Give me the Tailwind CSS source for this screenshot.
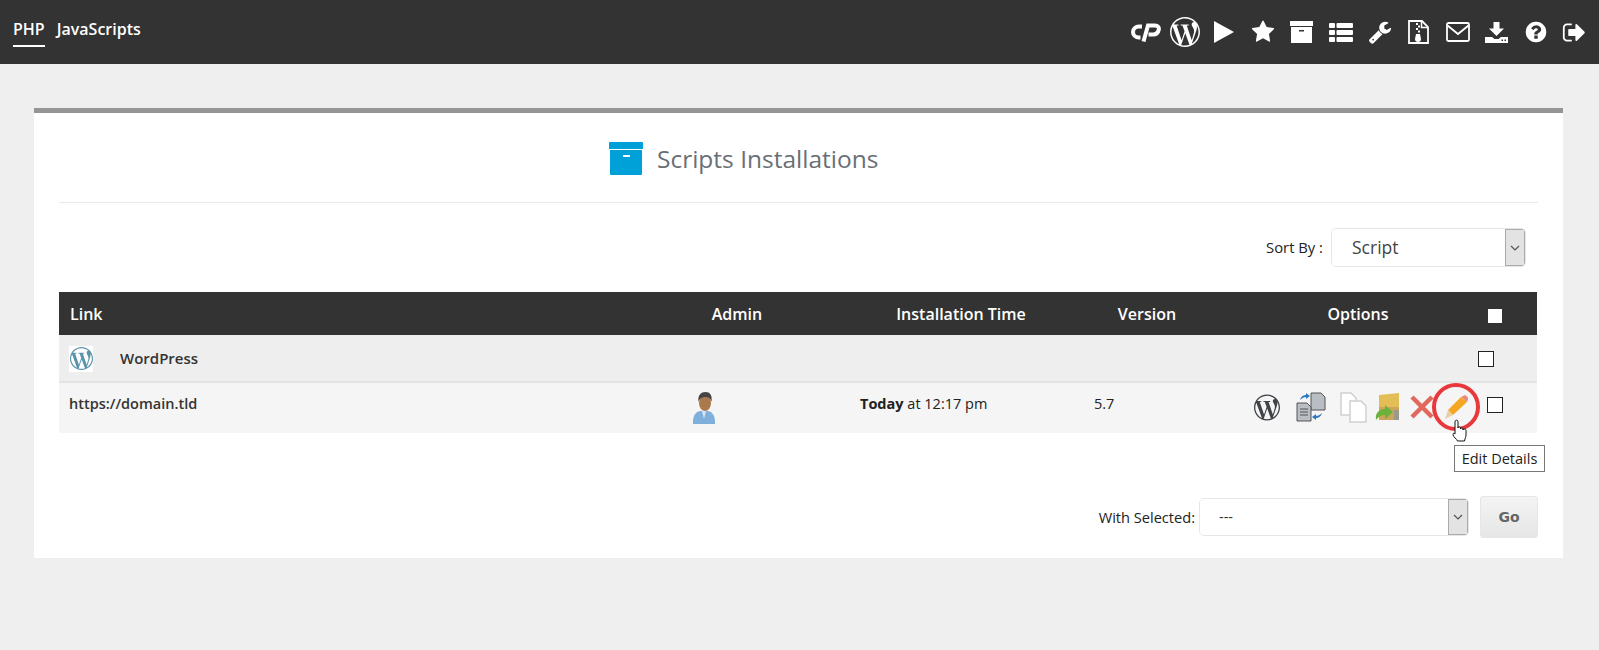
<!DOCTYPE html>
<html lang="en">
<head>
  <meta charset="UTF-8" />
  <title>Scripts Installations</title>
  <script src="https://cdn.jsdelivr.net/npm/@tailwindcss/browser@4"></script>
</head>
<body class="bg-[#efefef] font-['Open_Sans',sans-serif] text-[#333] h-[650px] overflow-hidden">

  <svg class="hidden">
    <symbol id="wp" viewBox="0 0 24 24">
      <path d="M21.469 6.825c.84 1.537 1.318 3.3 1.318 5.175 0 3.979-2.156 7.456-5.363 9.325l3.295-9.527c.615-1.54.82-2.771.82-3.864 0-.405-.026-.78-.07-1.11m-7.981.105c.647-.03 1.232-.105 1.232-.105.582-.075.514-.93-.067-.899 0 0-1.755.135-2.88.135-1.064 0-2.85-.15-2.85-.15-.585-.03-.661.855-.075.885 0 0 .54.061 1.125.09l1.68 4.605-2.37 7.08L5.354 6.9c.649-.03 1.234-.1 1.234-.1.585-.075.516-.93-.065-.896 0 0-1.746.138-2.874.138-.2 0-.438-.008-.69-.015C4.911 3.15 8.235 1.215 12 1.215c2.809 0 5.365 1.072 7.286 2.833-.046-.003-.091-.009-.141-.009-1.06 0-1.812.923-1.812 1.914 0 .89.513 1.643 1.06 2.531.411.72.89 1.643.89 2.977 0 .915-.354 1.994-.821 3.479l-1.075 3.585-3.9-11.61.001.014zM12 22.784c-1.059 0-2.081-.153-3.048-.437l3.237-9.406 3.315 9.087c.024.053.05.101.078.149-1.12.393-2.325.609-3.582.609M1.211 12c0-1.564.336-3.05.935-4.39L7.29 21.709C3.694 19.96 1.212 16.271 1.211 12M12 0C5.385 0 0 5.385 0 12s5.385 12 12 12 12-5.385 12-12S18.615 0 12 0"/>
    </symbol>
  </svg>

  <!-- top bar -->
  <header class="h-[64px] bg-[#333] flex items-center justify-between text-white pl-[13px] pr-[5px]">
    <nav class="self-start flex gap-[12px] text-[16px] font-semibold">
      <a class="h-[47px] pt-[17px] leading-[24px] border-b-2 border-white">PHP</a>
      <a class="h-[47px] pt-[17px] leading-[24px]">JavaScripts</a>
    </nav>
    <div class="flex items-center">
      <span class="w-[39px] flex justify-center">
        <svg class="w-[30px] h-[20px]" viewBox="0 0 30 20" fill="none" stroke="white" stroke-width="4"><path d="M11 4.500H8C4.500 4.500 2 7 2 10S4.500 15.500 8 15.500H9.500"/><path d="M12.500 19.500 17 3.500H24C27 3.500 28.200 5.500 27.800 7.500 27.200 10.500 25 12.500 22 12.500H17.500"/></svg>
      </span>
      <span class="w-[39px] flex justify-center"><svg class="w-[30px] h-[30px] fill-white"><use href="#wp"/></svg></span>
      <span class="w-[39px] flex justify-center"><svg class="w-[20px] h-[22px] fill-white" viewBox="0 0 20 22"><path d="M0 0 20 11 0 22z"/></svg></span>
      <span class="w-[39px] flex justify-center"><svg class="w-[24px] h-[24px] fill-white" viewBox="0 0 1792 1792"><path d="M1728 647q0 22-26 48l-363 354 86 500q1 7 1 20 0 21-10.500 35.500t-30.500 14.500q-19 0-40-12l-449-236-449 236q-22 12-40 12-21 0-31.500-14.500t-10.500-35.500q0-6 2-20l86-500-364-354q-25-27-25-48 0-37 56-46l502-73 225-455q19-41 49-41t49 41l225 455 502 73q56 9 56 46z"/></svg></span>
      <span class="w-[39px] flex justify-center"><svg class="w-[23px] h-[22px] fill-white" viewBox="0 0 23 22"><path fill-rule="evenodd" d="M0 0h23v5H0zM1 6h21v16H1zM9 9v1.500h5V9z"/></svg></span>
      <span class="w-[39px] flex justify-center"><svg class="w-[24px] h-[19px] fill-white" viewBox="0 0 24 19"><rect width="6" height="5" rx="1"/><rect x="7.500" width="16.500" height="5" rx="1"/><rect y="7" width="6" height="5" rx="1"/><rect x="7.500" y="7" width="16.500" height="5" rx="1"/><rect y="14" width="6" height="5" rx="1"/><rect x="7.500" y="14" width="16.500" height="5" rx="1"/></svg></span>
      <span class="w-[39px] flex justify-center"><svg class="w-[24px] h-[24px] fill-white" viewBox="0 0 1792 1792"><path d="M448 1472q0-26-19-45t-45-19-45 19-19 45 19 45 45 19 45-19 19-45zm644-420l-682 682q-37 37-90 37-52 0-91-37l-106-108q-38-36-38-90 0-53 38-91l681-681q39 98 114.500 173.500t173.500 114.500zm634-435q0 39-23 106-47 134-164.500 217.500t-258.500 83.500q-185 0-316.500-131.500t-131.500-316.500 131.500-316.500 316.500-131.500q58 0 121.500 16.500t107.500 46.500q16 11 16 28t-16 28l-293 169v224l193 107q5-3 79-48.500t135.500-81 70.500-35.500q15 0 23.500 10t8.500 25z"/></svg></span>
      <span class="w-[39px] flex justify-center">
        <svg class="w-[21px] h-[24px]" viewBox="0 0 21 24" fill="none" stroke="white"><path d="M1 1h13l6 6v16H1z" stroke-width="1.800"/><path d="M13.500 1v6.500H20" stroke-width="1.500"/><path d="M8 3h2v2H8zM10 5.500h2v2h-2zM8 8h2v2H8zM10 10.500h2v2h-2z" fill="white" stroke="none"/><path d="M8 14h4l1 5a3 3 0 0 1-6 0z" fill="white" stroke="none"/></svg>
      </span>
      <span class="w-[39px] flex justify-center">
        <svg class="w-[24px] h-[20px]" viewBox="0 0 24 20" fill="none" stroke="white" stroke-width="1.800"><rect x="1" y="1" width="22" height="18" rx="1.500"/><path d="M1.500 3.500 12 12l10.500-8.500"/></svg>
      </span>
      <span class="w-[39px] flex justify-center"><svg class="w-[23px] h-[21px] fill-white" viewBox="0 0 23 21"><path d="M8.500 0h6v6.500H19L11.500 14 4 6.500h4.500z"/><path fill-rule="evenodd" d="M0 15h7l2.500 2h4l2.500-2h7v6H0zM16.500 17.500v1.500H18v-1.500zM19.500 17.500v1.500H21v-1.500z"/></svg></span>
      <span class="w-[39px] flex justify-center"><svg class="w-[24px] h-[24px] fill-white" viewBox="0 0 1792 1792"><path d="M1024 1376v-192q0-14-9-23t-23-9h-192q-14 0-23 9t-9 23v192q0 14 9 23t23 9h192q14 0 23-9t9-23zm256-672q0-88-55.500-163t-138.500-116-170-41q-243 0-371 213-15 24 8 42l132 100q7 6 19 6 16 0 25-12 53-68 86-92 34-24 86-24 48 0 85.500 26t37.500 59q0 38-20 61t-68 45q-63 28-115.500 86.500t-52.500 125.500v36q0 14 9 23t23 9h192q14 0 23-9t9-23q0-19 21.500-49.500t54.500-49.500q32-18 49-28.500t46-35 44.500-48 28-60.500 12.500-81zm384 192q0 209-103 385.500t-279.500 279.500-385.500 103-385.500-103-279.500-279.500-103-385.500 103-385.500 279.500-279.500 385.500-103 385.500 103 279.500 279.500 103 385.500z"/></svg></span>
      <span class="w-[39px] flex justify-center"><svg class="w-[25px] h-[25px] fill-white" viewBox="0 0 1792 1792"><path d="M704 1440q0 4 1 20t.5 26.500-3 23.500-10 19.500-20.500 6.500h-320q-119 0-203.500-84.500t-84.500-203.500v-704q0-119 84.500-203.500t203.500-84.500h320q13 0 22.500 9.500t9.500 22.500q0 4 1 20t.5 26.500-3 23.500-10 19.500-20.500 6.500h-320q-66 0-113 47t-47 113v704q0 66 47 113t113 47h312l11.500 1 11.500 3 8 5.500 7 9 2 13.500zm928-544q0 26-19 45l-544 544q-19 19-45 19t-45-19-19-45v-288h-448q-26 0-45-19t-19-45v-384q0-26 19-45t45-19h448v-288q0-26 19-45t45-19 45 19l544 544q19 19 19 45z"/></svg></span>
    </div>
  </header>

  <!-- card -->
  <main class="relative mx-[34px] mt-[44px] w-[1529px] h-[450px] bg-white border-t-[5px] border-[#959595] px-[25px]">
    <div class="h-[90px] border-b border-[#eaeaea] flex items-center pl-[550px] pt-[2px]">
      <svg class="w-[34px] h-[33px] fill-[#00a1d8] mr-[14px]" viewBox="0 0 34 33"><path fill-rule="evenodd" d="M0 1a1 1 0 0 1 1-1h32a1 1 0 0 1 1 1v6H0zM1 8h32v24a1 1 0 0 1-1 1H2a1 1 0 0 1-1-1zM14 13v2h7v-2z"/></svg>
      <h1 class="text-[24.5px] leading-[32px] text-[#6a6f76]">Scripts Installations</h1>
    </div>

    <div class="h-[89px] pt-[25px] flex justify-end items-start pr-[12px]">
      <span class="text-[14.800px] leading-[39px] text-[#222] mr-[8px]">Sort By :</span>
      <div class="w-[195px] h-[39px] flex border border-[#e6e6e6] rounded-[5px] overflow-hidden">
        <select class="flex-1 min-w-0 appearance-none bg-white pl-[20px] text-[17.500px] text-[#444]"><option>Script</option></select>
        <span class="w-[20px] bg-[#e3e3e3] border border-[#aaa] flex items-center justify-center">
          <svg class="w-[10px] h-[6px]" viewBox="0 0 10 6" fill="none" stroke="#555" stroke-width="1.200"><path d="M1 1l4 4 4-4"/></svg>
        </span>
      </div>
    </div>

    <!-- table -->
    <div class="grid grid-cols-[621px_170px_234px_126px_260px_67px] items-center text-[14.500px]">
      <div class="col-span-6 grid grid-cols-subgrid items-center h-[43px] bg-[#333] text-white text-[16px] font-semibold">
        <div class="pl-[11px]">Link</div>
        <div class="text-center pr-[56px]">Admin</div>
        <div class="text-center pr-[12px]">Installation Time</div>
        <div class="text-center">Version</div>
        <div class="text-center pl-[36px]">Options</div>
        <div class="flex justify-center pr-[18px] pt-[5px]"><span class="w-[14px] h-[14px] bg-white block"></span></div>
      </div>

      <div class="col-span-6 grid grid-cols-subgrid items-center h-[48px] pt-[1px] bg-[#eee] border-b-2 border-[#e4e4e4]">
        <div class="flex items-center pl-[10px] font-semibold text-[#333]">
          <span class="w-[24px] h-[26px] bg-white flex items-center justify-center"><svg class="w-[23px] h-[23px] fill-[#5b93ab]"><use href="#wp"/></svg></span>
          <span class="ml-[27px] text-[15px]">WordPress</span>
        </div>
        <div></div><div></div><div></div><div></div>
        <div class="flex justify-start pl-[8px]"><span class="w-[16px] h-[16px] border border-[#222] bg-white block"></span></div>
      </div>

      <div class="col-span-6 grid grid-cols-subgrid items-center h-[50px] bg-[#f5f5f5]">
        <div class="pl-[10px] font-semibold text-[#333] pb-[9px]">https://domain.tld</div>
        <div class="pl-[13px]">
          <svg class="w-[22px] h-[32px] -mt-[1px] blur-[0.4px]" viewBox="0 0 22 32">
            <path d="M0 32c-.500-7 2-12 7-13h8c5 1 7.500 6 7 13z" fill="#7fb0dc"/>
            <path d="M9 19l2 8 2-8z" fill="#d9e6f2"/>
            <ellipse cx="12" cy="11" rx="6" ry="8" fill="#ab7a4c"/>
            <path d="M5.500 10C4.500 3 8 0 12.500 0s7 3 6 10c-1-4-3-5-6-5s-6 1-7 5z" fill="#444"/>
          </svg>
        </div>
        <div class="pl-[10px] pb-[9px] text-[#222]"><b class="font-bold">Today</b> at 12:17 pm</div>
        <div class="pl-[10px] pb-[9px] text-[#222]">5.7</div>
        <div class="flex items-center pl-[44px] pb-[2px]">
          <svg class="w-[26px] h-[27px] fill-[#3f4347]"><use href="#wp"/></svg>
          <svg class="ml-[16px] w-[30px] h-[30px]" viewBox="0 0 30 30">
            <path d="M15 1h10l4 4v13H15z" fill="#b9bec4" stroke="#555"/>
            <path d="M1 11h10l4 4v14H1z" fill="#b9bec4" stroke="#555"/>
            <path d="M4 17h8M4 20h8M4 23h8" stroke="#555"/>
            <path d="M4 8c1-4 4-5 6-5V1l4 3-4 3V5c-2 0-4 1-6 3zM26 21c-1 4-4 5-6 5v2l-4-3 4-3v2c2 0 4-1 6-3z" fill="#2f78bf"/>
          </svg>
          <svg class="ml-[14px] w-[27px] h-[31px]" viewBox="0 0 27 31" fill="#fff" stroke="#cfcfcf" stroke-width="1.500">
            <path d="M1 1h10l5 5v17H1z"/><path d="M10 9h11l5 5v16H10z"/>
          </svg>
          <svg class="ml-[8px] w-[25px] h-[29px]" viewBox="0 0 25 29">
            <path d="M4 2 24 0v27H4z" fill="#e3bd55"/>
            <path d="M4 14h20v13H4z" fill="#c9a65a"/>
            <rect x="19" y="17" width="5" height="10" fill="#9a9a8a"/>
            <path d="M1 27c-1-7 3-11 9-11v-4l8 7-8 7v-4c-4 0-7 2-9 5z" fill="#6cb23a"/>
          </svg>
          <svg class="ml-[10px] w-[24px] h-[24px]" viewBox="0 0 24 24" stroke="#e0685c" stroke-width="4.500"><path d="M2 2l20 20M22 2 2 22"/></svg>
          <svg class="ml-[10px] w-[24px] h-[25px]" viewBox="0 0 24 25">
            <path d="M17 2 4 15l5 5L23 7z" fill="#f5a623"/>
            <path d="M17 2l3-1.500c1-.500 2 0 3 1s1.500 2 1 3L23 7z" fill="#e98a80"/>
            <path d="M4 15 1 24l8-4z" fill="#e8cfa8"/>
          </svg>
        </div>
        <div class="flex justify-start pl-[17px] pb-[7px]"><span class="w-[16px] h-[16px] border border-[#222] bg-white block"></span></div>
      </div>
    </div>

    <!-- with selected -->
    <div class="flex justify-end mt-[63px]">
      <span class="text-[14.600px] leading-[38px] text-[#222] mt-[2px] mr-[4px]">With Selected:</span>
      <div class="w-[270px] h-[38px] mt-[2px] flex border border-[#e6e6e6] rounded-[5px] overflow-hidden">
        <select class="flex-1 min-w-0 appearance-none bg-white pl-[19px] text-[14.500px] text-[#333]"><option>---</option></select>
        <span class="w-[20px] bg-[#e3e3e3] border border-[#aaa] flex items-center justify-center">
          <svg class="w-[10px] h-[6px]" viewBox="0 0 10 6" fill="none" stroke="#555" stroke-width="1.200"><path d="M1 1l4 4 4-4"/></svg>
        </span>
      </div>
      <button class="ml-[11px] w-[58px] h-[42px] rounded-[3px] border border-[#e6e6e6] bg-gradient-to-b from-[#f4f4f4] to-[#e6e6e6] text-[14px] font-bold text-[#666] font-['DejaVu_Sans',sans-serif]">Go</button>
    </div>

    <!-- highlight, pointer and tooltip over the pencil -->
    <span class="absolute left-[1398px] top-[270px] w-[48px] h-[48px] rounded-full border-[4px] border-[#e8383c]"></span>
    <svg class="absolute left-[1418px] top-[306px] w-[15px] h-[23px]" viewBox="0 0 15 23" fill="#fff" stroke="#111" stroke-width="1">
      <path d="M3 15V3c0-2.500 3-2.500 3 0v6c0-1.500 2.500-1.500 2.500 0v1c0-1.500 2.500-1.500 2.500 0v1c0-1.500 3-1.500 3 .5V16c0 2-1 3-1.500 6h-7C5 20 1 18 1 15.500 1 14 2 14 3 15z"/>
    </svg>
    <div class="absolute left-[1420px] top-[332px] w-[91px] h-[27px] bg-white border border-[#777] text-[14.500px] leading-[25px] text-center text-[#222] whitespace-nowrap">Edit Details</div>
  </main>
</body>
</html>
